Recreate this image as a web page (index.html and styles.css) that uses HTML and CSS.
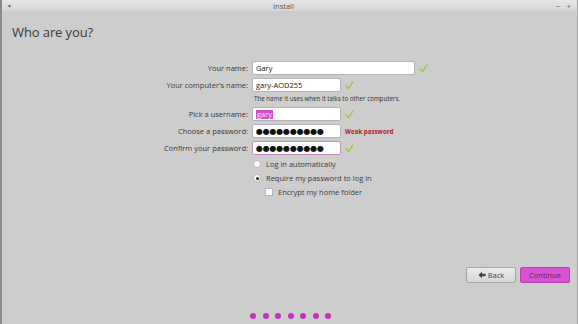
FILE: index.html
```html
<!DOCTYPE html>
<html lang="en">
<head>
  <meta charset="UTF-8" />
  <title>Install</title>
  <link rel="stylesheet" href="styles.css">
</head>
<body>
  <div class="window">
    <div class="titlebar">
      <span class="menu-arrow">&#9662;</span>
      <span class="title">Install</span>
      <span class="controls"><span>&minus;</span><span>+</span></span>
    </div>

    <h1>Who are you?</h1>

    <div class="form">
      <div class="row">
        <label>Your name:</label>
        <div class="field wide">Gary</div>
        <svg class="check" viewBox="0 0 12 12"><path d="M1.5 6.5 L4.5 10 L10.5 1.5" /></svg>
      </div>

      <div class="row">
        <label>Your computer's name:</label>
        <div class="field">gary-AOD255</div>
        <svg class="check" viewBox="0 0 12 12"><path d="M1.5 6.5 L4.5 10 L10.5 1.5" /></svg>
      </div>
      <div class="hint">The name it uses when it talks to other computers.</div>

      <div class="row">
        <label>Pick a username:</label>
        <div class="field"><span class="selected">gary</span></div>
        <svg class="check" viewBox="0 0 12 12"><path d="M1.5 6.5 L4.5 10 L10.5 1.5" /></svg>
      </div>

      <div class="row">
        <label>Choose a password:</label>
        <div class="field dots">●●●●●●●●●●</div>
        <span class="weak">Weak password</span>
      </div>

      <div class="row">
        <label>Confirm your password:</label>
        <div class="field dots focused">●●●●●●●●●●</div>
        <svg class="check" viewBox="0 0 12 12"><path d="M1.5 6.5 L4.5 10 L10.5 1.5" /></svg>
      </div>

      <div class="options">
        <div class="option"><span class="radio"></span>Log in automatically</div>
        <div class="option"><span class="radio on"></span>Require my password to log in</div>
        <div class="option sub"><span class="box"></span>Encrypt my home folder</div>
      </div>
    </div>

    <div class="buttons">
      <button class="btn back">
        <svg class="arrow" viewBox="0 0 10 10"><path d="M0.5 5 L5 1 L5 3.5 L9.5 3.5 L9.5 6.5 L5 6.5 L5 9 Z" /></svg>Back
      </button>
      <button class="btn continue">Continue</button>
    </div>

    <div class="progress">
      <span></span><span></span><span></span><span></span><span></span><span></span><span></span>
    </div>
  </div>
</body>
</html>
```

FILE: styles.css
```css
html, body {
  margin: 0;
  padding: 0;
}

body {
  font-family: 'Open Sans', 'Noto Sans', sans-serif;
  background: #cdcdcd;
  color: #3c3c3c;
}

.window {
  width: 578px;
  height: 324px;
  box-sizing: border-box;
  border-left: 2px solid #8a8a8a;
  border-right: 1px solid #a8a8a8;
  position: relative;
}

.titlebar {
  height: 11px;
  background: linear-gradient(#e6e6e6, #d6d6d6);
  display: flex;
  align-items: center;
  padding: 0 6px;
  font-size: 7px;
  color: #555;
}

.menu-arrow {
  font-size: 6px;
  color: #666;
}

.title {
  flex: 1;
  text-align: center;
  font-size: 7.5px;
}

.controls {
  display: flex;
  gap: 6px;
  font-size: 8px;
  color: #666;
}

h1 {
  font-size: 13px;
  font-weight: 400;
  color: #3a3a3a;
  margin: 12px 0 0 10px;
  letter-spacing: -0.1px;
}

.form {
  margin-top: 20px;
  display: flex;
  flex-direction: column;
  gap: 3px;
  font-size: 7.5px;
}

.row {
  display: flex;
  align-items: center;
  gap: 4px;
  height: 14px;
}

.row label {
  width: 246px;
  text-align: right;
  color: #3a3a3a;
}

.field {
  width: 89px;
  height: 14px;
  box-sizing: border-box;
  background: #fff;
  border: 1px solid #b4b4b4;
  border-radius: 2px;
  padding: 0 3px;
  display: flex;
  align-items: center;
  color: #222;
}

.field.wide {
  width: 163px;
}

.field.focused {
  border-color: #c88cc4;
}

.selected {
  background: #d44ccd;
  color: #f6e6f4;
  padding: 0 1px;
  line-height: 9px;
}

.dots {
  font-family: 'DejaVu Sans', sans-serif;
  font-size: 8px;
  letter-spacing: -0.2px;
  color: #111;
}

.check {
  width: 9px;
  height: 9px;
  margin-left: 0;
}

.check path {
  fill: none;
  stroke: #9ccd4c;
  stroke-width: 2.2;
  stroke-linecap: round;
  stroke-linejoin: round;
}

.weak {
  color: #b22424;
  font-weight: 700;
  font-size: 6.2px;
}

.hint {
  margin: -1px 0 1px 252px;
  font-size: 6.2px;
  color: #333;
}

.options {
  margin: 1.5px 0 0 251px;
  display: flex;
  flex-direction: column;
  gap: 5px;
}

.option {
  display: flex;
  align-items: center;
  gap: 5px;
  height: 9px;
}

.option.sub {
  margin-left: 12px;
}

.radio {
  width: 6px;
  height: 6px;
  border-radius: 50%;
  background: #fff;
  border: 1px solid #b8b8b8;
  position: relative;
}

.radio.on::after {
  content: "";
  position: absolute;
  left: 1.5px;
  top: 1.5px;
  width: 3px;
  height: 3px;
  border-radius: 50%;
  background: #222;
}

.box {
  width: 6px;
  height: 6px;
  background: #fff;
  border: 1px solid #b8b8b8;
}

.buttons {
  position: absolute;
  right: 7px;
  top: 267px;
  display: flex;
  gap: 4px;
}

.btn {
  width: 50px;
  height: 16px;
  border-radius: 2px;
  font-family: 'Open Sans', 'Noto Sans', sans-serif;
  font-size: 7.5px;
  display: flex;
  align-items: center;
  justify-content: center;
  padding: 0;
  gap: 2px;
}

.back {
  background: linear-gradient(#ececec, #d6d6d6);
  border: 1px solid #a6a6a6;
  color: #444;
}

.arrow {
  width: 8px;
  height: 8px;
}

.arrow path {
  fill: #444;
}

.continue {
  background: #d853d2;
  border: 1px solid #b83cb2;
  color: #5a2458;
}

.progress {
  position: absolute;
  left: 248px;
  top: 313px;
  display: flex;
  gap: 6.5px;
}

.progress span {
  width: 6px;
  height: 6px;
  border-radius: 50%;
  background: #c82fc2;
}
```
